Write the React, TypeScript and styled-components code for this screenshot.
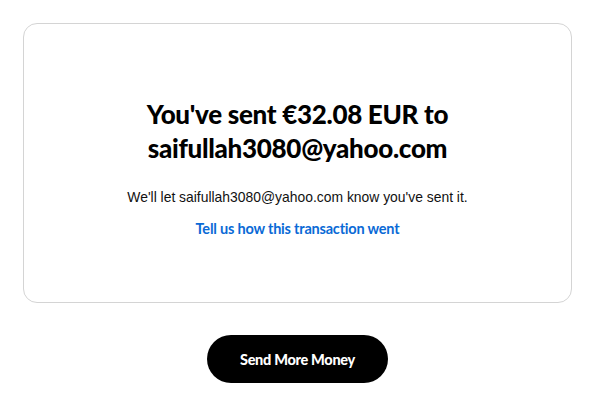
import React from 'react'
import styled, { createGlobalStyle } from 'styled-components'

const GlobalStyle = createGlobalStyle`
  html, body {
    margin: 0;
    padding: 0;
    background: #ffffff;
  }
  body {
    font-family: "Liberation Sans", Arial, sans-serif;
    color: #000;
  }
`

const Page = styled.div`
  display: flex;
  flex-direction: column;
  align-items: center;
  padding: 23px 27px 0 23px;
`

const Card = styled.section`
  box-sizing: border-box;
  width: 549px;
  height: 280px;
  border: 1px solid #d4d4d4;
  border-radius: 14px;
  display: flex;
  flex-direction: column;
  align-items: center;
  padding-top: 73px;
`

const Title = styled.h1`
  margin: 0;
  font-family: Lato, "Open Sans", sans-serif;
  font-weight: 900;
  font-size: 26px;
  line-height: 34px;
  letter-spacing: -0.3px;
  text-align: center;
  color: #000;
`

const Note = styled.p`
  margin: 22px 0 0;
  font-size: 13.9px;
  line-height: 20px;
  color: #111;
`

const FeedbackLink = styled.a`
  margin-top: 13px;
  font-family: Lato, sans-serif;
  font-weight: 700;
  font-size: 14.5px;
  letter-spacing: -0.2px;
  color: #0a6ad6;
  text-decoration: none;
  cursor: pointer;
`

const Button = styled.button`
  margin-top: 32px;
  width: 181px;
  height: 48px;
  border: none;
  border-radius: 24px;
  background: #000;
  color: #fff;
  font-family: Lato, sans-serif;
  font-weight: 900;
  font-size: 14.5px;
  letter-spacing: -0.3px;
  cursor: pointer;
`

const App = () => {
  return (
    <>
      <GlobalStyle />
      <Page>
        <Card>
          <Title>
            You've sent €32.08 EUR to
            <br />
            saifullah3080@yahoo.com
          </Title>
          <Note>We'll let saifullah3080@yahoo.com know you've sent it.</Note>
          <FeedbackLink>Tell us how this transaction went</FeedbackLink>
        </Card>
        <Button>Send More Money</Button>
      </Page>
    </>
  )
}

export default App
